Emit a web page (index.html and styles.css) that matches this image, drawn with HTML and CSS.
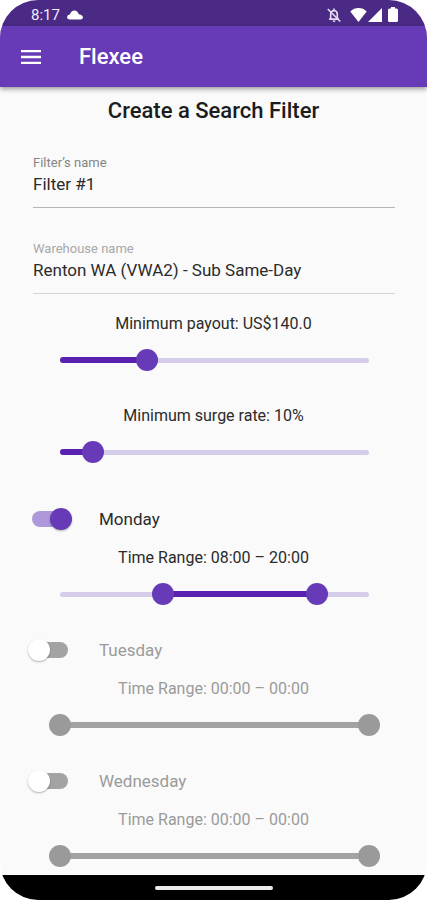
FILE: index.html
```html
<!DOCTYPE html>
<html lang="en">
<head>
<meta charset="utf-8">
<meta name="viewport" content="width=device-width, initial-scale=1">
<title>Flexee</title>
<link rel="stylesheet" href="styles.css">
</head>
<body>
<div class="screen">
  <div class="status">
    <span class="clock">8:17</span>
    <svg class="cloud" viewBox="0 0 16 10" width="16" height="10" aria-hidden="true"><path fill="#fff" d="M2.500 9.500Q0 9.300 0 7.200Q.200 5 2.800 4.600Q4.300 .500 7.500.500Q10.600 .800 11.800 4.200Q16 5 16 7.500Q15.800 9.500 13.500 9.500z"/></svg>
    <div class="signals">
      <svg class="bell" viewBox="0 0 14 16" width="14" height="16" aria-hidden="true"><g fill="none" stroke="#e2daf0" stroke-width="1.700"><path d="M3.700 12V7a3.300 3.300 0 0 1 6.600 0v5M2 12.200h10M7 1.500v2"/><path d="M.800 2l12.500 12.500"/></g><path fill="#e2daf0" d="M5.500 13.500h3a1.500 1.500 0 0 1-3 0z"/></svg>
      <svg viewBox="0 0 17 14" width="17" height="14" aria-hidden="true"><path fill="#fff" d="M8.500 14L.300 3.400C2.500 1.200 5.200 0 8.500 0s6 1.200 8.200 3.400z"/></svg>
      <svg class="cell" viewBox="0 0 14 14" width="14" height="14" aria-hidden="true"><path fill="#fff" d="M14 0v14H0z"/></svg>
      <svg viewBox="0 0 10 15" width="10" height="15" aria-hidden="true"><path fill="#fff" d="M3 0h4v1.500h1.500Q10 1.500 10 3v10.500q0 1.500-1.500 1.500h-7Q0 15 0 13.500V3q0-1.500 1.500-1.500H3z"/></svg>
    </div>
  </div>
  <header class="appbar">
    <button class="menu" type="button" aria-label="Menu"><svg viewBox="0 0 20 14" width="20" height="14" aria-hidden="true"><path stroke="#fff" stroke-width="2.300" d="M0 1.200h20M0 7h20M0 12.800h20"/></svg></button>
    <h1 class="brand">Flexee</h1>
  </header>
  <main class="content">
    <h2 class="title">Create a Search Filter</h2>
    <div class="field">
      <label for="name">Filter’s name</label>
      <input id="name" type="text" value="Filter #1">
    </div>
    <div class="field field-light">
      <label for="warehouse">Warehouse name</label>
      <input id="warehouse" type="text" value="Renton WA (VWA2) - Sub Same-Day">
    </div>
    <div class="setting">
      <label for="payout">Minimum payout: US$140.0</label>
      <div class="slider">
        <div class="track"><div class="fill" style="width:28%"></div></div>
        <input id="payout" type="range" min="0" max="500" value="140">
      </div>
    </div>
    <div class="setting">
      <label for="surge">Minimum surge rate: 10%</label>
      <div class="slider">
        <div class="track"><div class="fill" style="width:10.6%"></div></div>
        <input id="surge" type="range" min="0" max="94" value="10">
      </div>
    </div>
    <section class="day">
      <div class="day-head"><input id="mon" class="switch" type="checkbox" role="switch" checked><label for="mon">Monday</label></div>
      <p class="range-text">Time Range: 08:00 – 20:00</p>
      <div class="slider slider-range">
        <div class="track"><div class="fill" style="margin-left:33.333%;width:50%"></div></div>
        <input type="range" min="0" max="24" value="8" aria-label="Monday start">
        <input type="range" min="0" max="24" value="20" aria-label="Monday end">
      </div>
    </section>
    <section class="day day-off">
      <div class="day-head"><input id="tue" class="switch" type="checkbox" role="switch"><label for="tue">Tuesday</label></div>
      <p class="range-text">Time Range: 00:00 – 00:00</p>
      <div class="slider slider-range">
        <div class="track"><div class="fill" style="width:100%"></div></div>
        <input type="range" min="0" max="24" value="0" aria-label="Tuesday start" disabled>
        <input type="range" min="0" max="24" value="24" aria-label="Tuesday end" disabled>
      </div>
    </section>
    <section class="day day-off">
      <div class="day-head"><input id="wed" class="switch" type="checkbox" role="switch"><label for="wed">Wednesday</label></div>
      <p class="range-text">Time Range: 00:00 – 00:00</p>
      <div class="slider slider-range">
        <div class="track"><div class="fill" style="width:100%"></div></div>
        <input type="range" min="0" max="24" value="0" aria-label="Wednesday start" disabled>
        <input type="range" min="0" max="24" value="24" aria-label="Wednesday end" disabled>
      </div>
    </section>
  </main>
  <div class="navbar"><div class="pill"></div></div>
</div>
</body>
</html>
```
FILE: styles.css
```css
* { box-sizing: border-box; }
body {
  margin: 0;
  background: #fff;
  color: #2b2b2b;
  font: 17px/24px Roboto, sans-serif;
}
h1, h2, p { margin: 0; }
.screen {
  display: flex;
  flex-direction: column;
  height: 100vh;
  overflow: hidden;
  border-radius: 38px;
  background: #fafafa;
}

/* Bars */
.status {
  flex: none;
  display: flex;
  align-items: center;
  height: 26px;
  padding: 3px 29px 0 31px;
  background: #4b2a86;
  color: #f1ecf8;
  font-size: 15px;
}
.cloud { margin-left: 7px; }
.signals { display: flex; align-items: center; margin-left: auto; }
.bell { margin-right: 9px; }
.cell { margin: 0 6px 0 1px; }
.appbar {
  flex: none;
  display: flex;
  align-items: center;
  gap: 38px;
  height: 61px;
  padding: 0 21px;
  background: #673ab7;
  box-shadow: 0 2px 5px rgba(0, 0, 0, .4);
  z-index: 1;
}
.menu {
  display: flex;
  padding: 0;
  border: 0;
  background: none;
  cursor: pointer;
}
.brand { color: #fff; font-size: 22px; font-weight: 500; }
.navbar {
  flex: none;
  display: flex;
  align-items: center;
  justify-content: center;
  height: 25px;
  background: #000;
}
.pill { width: 118px; height: 4px; border-radius: 2px; background: #ececec; }

/* Form */
.content { flex: 1; min-height: 0; overflow: hidden; padding-top: 12px; }
.title {
  margin-bottom: 32px;
  color: #1c1c1c;
  font-size: 22px;
  font-weight: 500;
  text-align: center;
}
.field { margin: 0 32px 33px 33px; }
.field label {
  display: block;
  color: #858585;
  font-size: 13px;
  line-height: 16px;
}
.field input {
  display: block;
  width: 100%;
  height: 37px;
  padding: 0 0 10px;
  border: 0;
  border-bottom: 1px solid #b5b5b5;
  background: none;
  color: #2b2b2b;
  font: inherit;
  outline: 0;
}
.field-light { margin-bottom: 18px; }
.field-light label { color: #a8a8a8; }
.field-light input { border-color: #d6d6d6; }
.setting { margin-bottom: 33px; font-size: 16px; }
.setting label { display: block; margin-bottom: 13px; text-align: center; }

/* Sliders */
.slider { display: grid; align-items: center; height: 22px; margin: 0 47px 0 49px; }
.slider > * { grid-area: 1 / 1; min-width: 0; }
.track {
  display: flex;
  align-items: center;
  height: 5px;
  margin: 0 11px;
  border-radius: 3px;
  background: #d5cdea;
}
.fill { height: 6px; border-radius: 3px; background: #5a20b0; }
.slider input {
  appearance: none;
  width: 100%;
  height: 22px;
  margin: 0;
  background: none;
}
.slider input::-webkit-slider-thumb {
  appearance: none;
  width: 22px;
  height: 22px;
  border-radius: 50%;
  background: #673ab7;
  pointer-events: auto;
}
.slider-range input { pointer-events: none; }

/* Days */
.day { margin-bottom: 33px; }
.day-head {
  display: flex;
  align-items: center;
  gap: 27px;
  height: 24px;
  margin: 0 28px 15px;
}
.setting + .day { margin-top: 44px; }
.range-text { margin-bottom: 13px; font-size: 16px; text-align: center; }
.switch {
  appearance: none;
  display: flex;
  align-items: center;
  width: 44px;
  height: 22px;
  margin: 0;
  position: relative;
}
.switch::before {
  content: "";
  flex: 1;
  height: 16px;
  margin: 0 4px;
  border-radius: 8px;
  background: #a3a3a3;
}
.switch::after {
  content: "";
  position: absolute;
  left: 0;
  width: 22px;
  height: 22px;
  border-radius: 50%;
  background: #fff;
  box-shadow: 0 1px 2px rgba(0, 0, 0, .3);
}
.switch:checked::before { background: #ae98d9; }
.switch:checked::after { left: 22px; background: #673ab7; }
.day-off { color: #9a9a9a; }
.day-off .fill { background: #a3a3a3; }
.day-off .slider input::-webkit-slider-thumb { background: #9a9a9a; }
```
